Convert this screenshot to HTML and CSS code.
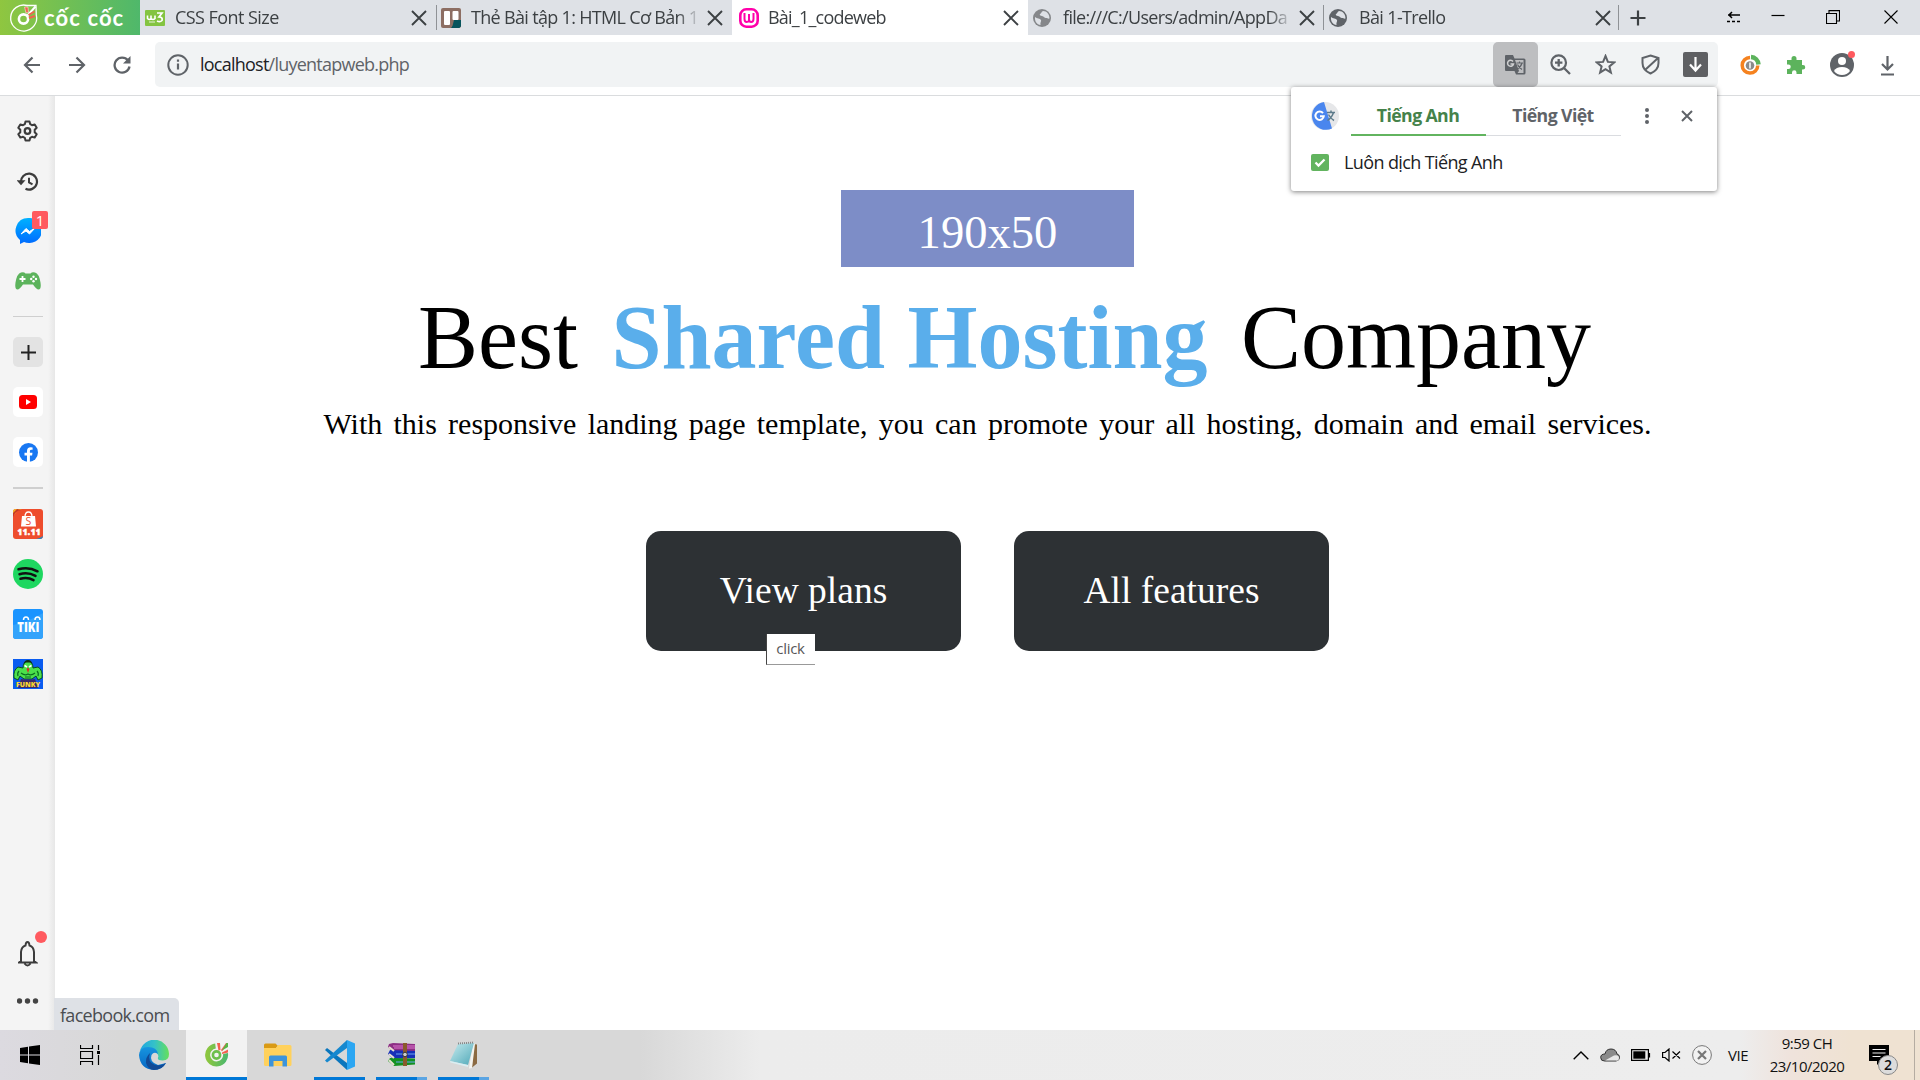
FILE: index.html
```html
<!DOCTYPE html>
<html lang="vi">
<head>
<meta charset="utf-8">
<title>Bài_1_codeweb</title>
<link rel="stylesheet" href="styles.css">
</head>
<body>
<svg class="defs" width="0" height="0">
  <defs>
    <symbol id="x" viewBox="0 0 16 16"><path d="M1 1l14 14M15 1L1 15" fill="none" stroke="#3c4043" stroke-width="1.9"/></symbol>
    <symbol id="globe" viewBox="0 0 18 18"><circle cx="9" cy="9" r="9" fill="currentColor"/><path d="M2 8c2 2 5 1 6 3 .6 1.600-1 2.400-.5 5C4 15.500 1.500 12.500 2 8zM10 2c-2 1-1.500 2.500-3 3-.8 1 .4 1.800 2 2 2 .2 2 2 4 2 1.500 0 2 1 3.500.5C16.500 5 14 2.200 10 2z" fill="#dee1e6"/></symbol>
    <linearGradient id="cg"><stop offset="0" stop-color="#8cc63f"/><stop offset="1" stop-color="#4fb96b"/></linearGradient>
    <linearGradient id="ms" x2="0" y2="1"><stop offset="0" stop-color="#00b2ff"/><stop offset="1" stop-color="#006aff"/></linearGradient>
    <linearGradient id="eg" x1="0" x2="1"><stop offset="0" stop-color="#1fa7e0"/><stop offset=".5" stop-color="#35c1c8"/><stop offset="1" stop-color="#66e05a"/></linearGradient>
    <linearGradient id="eb" x2="0" y2="1"><stop offset="0" stop-color="#1795df"/><stop offset="1" stop-color="#0667c4"/></linearGradient>
    <linearGradient id="np" x2="1" y2="1"><stop offset="0" stop-color="#c8ecef"/><stop offset="1" stop-color="#4fa8b8"/></linearGradient>
  </defs>
</svg>

<header class="tabstrip">
  <div class="brand">
    <svg width="30" height="30" viewBox="0 0 30 30"><path d="M18 2.500A13 13 0 1 0 27.300 12L27 2.500z" fill="none" stroke="#fff" stroke-width="1.300"/><circle cx="14.500" cy="16" r="4.600" fill="none" stroke="#fff" stroke-width="2.600"/><path d="M15.500 4l1.500 6 2.500-.5-.5-5.500z" fill="#f2614f" stroke="#fff" stroke-width=".5"/><path d="M18.500 12.500l8-9" stroke="#fff" stroke-width="2"/><path d="M19.500 12l6-3.500" stroke="#f2614f" stroke-width="2"/><path d="M20 15l6-2" stroke="#f2614f" stroke-width="2.200"/></svg>
    <span class="brand-name">cốc cốc</span>
  </div>
  <div class="tab">
    <svg class="fav" viewBox="0 0 20 16"><rect width="20" height="16" rx="1" fill="#84c441"/><path d="M2.500 5.500v3q2 2 3.500 0v-3 3q2 2 4 0v-3" fill="none" stroke="#fff" stroke-width="1.600"/><path d="M12 3h5l-3 4q4 0 3 3.500-2 2-5 .5" fill="none" stroke="#fff" stroke-width="1.700"/><path d="M4 12h6" stroke="#fff" stroke-width=".8"/></svg>
    <span class="title t-css">CSS Font Size</span><svg class="close"><use href="#x"/></svg>
  </div>
  <div class="tab sep">
    <svg class="fav" viewBox="0 0 20 20"><rect width="20" height="20" rx="2" fill="#8d6e63"/><path d="M10 20l6-7h4v5l-2 2z" fill="#00535b"/><path d="M13 12h7v6l-2 2h-7z" fill="#07545c"/><rect x="3" y="3" width="6" height="14" rx="1" fill="#fff"/><rect x="11.500" y="3" width="6" height="9" rx="1" fill="#fff"/></svg>
    <span class="title t-trello">Thẻ Bài tập 1: HTML Cơ Bản 1</span><svg class="close"><use href="#x"/></svg>
  </div>
  <div class="tab active">
    <svg class="fav" viewBox="0 0 20 20"><rect x="1.300" y="1.300" width="17.400" height="17.400" rx="6" fill="none" stroke="#f0a" stroke-width="2.600"/><path d="M5.500 5v6q0 3 2.300 3T10 11V6v5q0 3 2.200 3t2.300-3V5" fill="none" stroke="#f0a" stroke-width="2"/></svg>
    <span class="title t-code">Bài_1_codeweb</span><svg class="close"><use href="#x"/></svg>
  </div>
  <div class="tab">
    <svg class="fav globe pale"><use href="#globe"/></svg>
    <span class="title t-file">file:///C:/Users/admin/AppDa</span><svg class="close"><use href="#x"/></svg>
  </div>
  <div class="tab sep">
    <svg class="fav globe"><use href="#globe"/></svg>
    <span class="title t-last">Bài 1-Trello</span><svg class="close"><use href="#x"/></svg>
  </div>
  <div class="newtab"><svg width="16" height="16" viewBox="0 0 16 16"><path d="M8 .5v15M.5 8h15" stroke="#3c4043" stroke-width="2.200"/></svg></div>
  <div class="winctl">
    <svg viewBox="0 0 14 12"><path d="M1 4h12M5 1L2 4l3 3" fill="none" stroke="#000" stroke-width="1.500"/><path d="M0 10.500h14" stroke="#000" stroke-width="1.500" stroke-dasharray="3 2"/></svg>
    <svg viewBox="0 0 14 14"><path d="M.5 5.500h13" stroke="#000" stroke-width="1.200"/></svg>
    <svg viewBox="0 0 14 14"><path d="M.5 3.500h10v10H.5zM3 3.500V.6h10.500V11h-3" fill="none" stroke="#000" stroke-width="1.100"/></svg>
    <svg viewBox="0 0 14 14"><path d="M.5 .5l13 13M13.500 .5l-13 13" stroke="#000" stroke-width="1.100"/></svg>
  </div>
</header>

<nav class="toolbar">
  <div class="nav">
    <svg viewBox="0 0 18 18"><path d="M17 9H2M9.500 1.500L2 9l7.500 7.500" fill="none" stroke="#5f6368" stroke-width="2.200"/></svg>
    <svg viewBox="0 0 18 18"><path d="M1 9h15M8.500 1.500L16 9l-7.500 7.500" fill="none" stroke="#5f6368" stroke-width="2.200"/></svg>
    <svg viewBox="0 0 18 18"><path d="M15 4.500A7.500 7.500 0 1 0 16.500 10.500" fill="none" stroke="#5f6368" stroke-width="2.300"/><path d="M17.500 0v7.500H10z" fill="#5f6368"/></svg>
  </div>
  <div class="omnibox">
    <svg class="info" viewBox="0 0 22 22"><circle cx="11" cy="11" r="9.700" fill="none" stroke="#5f6368" stroke-width="2"/><path d="M11 9.500v6M11 5.500v2.200" stroke="#5f6368" stroke-width="2.200"/></svg>
    <div class="url">localhost<span>/luyentapweb.php</span></div>
    <div class="actions">
      <div class="act translate"><svg width="21" height="20" viewBox="0 0 21 20"><path d="M1 0h7l1.500 3.500H19q1.500 0 1.500 1.500v13q0 1.500-1.500 1.500h-8L9.500 16H1q-1 0-1-1V1q0-1 1-1z" fill="#5f6368"/><path d="M10 5h8.500v13h-6l1.500-2z" fill="#bdbec0"/><path d="M11.500 8h6.500M14.500 6.500V8M17 8q-1 4-5 6M12.500 9.500q1.500 3 4.500 5" stroke="#5f6368" stroke-width="1.200" fill="none"/><path d="M8 6.500A3 3 0 1 0 8.500 9H5.500" fill="none" stroke="#d0d1d2" stroke-width="1.500"/></svg></div>
      <div class="act"><svg width="21" height="21" viewBox="0 0 21 21"><circle cx="8.700" cy="8.700" r="7.300" fill="none" stroke="#5f6368" stroke-width="2.200"/><path d="M14 14l6 6M8.700 5v7.400M5 8.700h7.400" stroke="#5f6368" stroke-width="2.300"/></svg></div>
      <div class="act"><svg width="21" height="21" viewBox="0 0 21 21"><path d="M10.500 2l2.400 5.900 6.400.4-4.900 4.100 1.500 6.200-5.400-3.400-5.400 3.400 1.500-6.200-4.900-4.100 6.400-.4z" fill="none" stroke="#5f6368" stroke-width="2"/></svg></div>
      <div class="act"><svg width="21" height="21" viewBox="0 0 21 21"><path d="M10.500 1.500l8 2.500v5q0 7-8 10.500Q2.500 16 2.500 9V4zM5 16L17.500 4.500" fill="none" stroke="#5f6368" stroke-width="2"/></svg></div>
      <div class="act"><svg width="25" height="25" viewBox="0 0 25 25"><rect width="25" height="25" rx="2" fill="#5f6063"/><path d="M12.500 5v13M7 12.500l5.500 6 5.500-6" fill="none" stroke="#fff" stroke-width="2.200"/></svg></div>
    </div>
  </div>
  <div class="exts">
    <svg viewBox="0 0 24 24"><path d="M12 4.500A7.800 7.800 0 1 0 19.800 12.500" fill="none" stroke="#f5821f" stroke-width="3.500"/><path d="M13 4a8 8 0 0 1 7.500 7.500" fill="none" stroke="#5cb35c" stroke-width="4.500"/><circle cx="12" cy="12.500" r="4.300" fill="#8a8a8a"/><path d="M12 9.500v6" stroke="#fff" stroke-width="1.500"/></svg>
    <svg viewBox="0 0 24 24"><path d="M3 7h4.500V5.500a2.500 2.500 0 0 1 5 0V7H18v5h1a2.200 2.200 0 0 1 0 4.500h-1V21h-5.500v-1.500a2 2 0 0 0-4.500 0V21H3v-5h1.500a2 2 0 0 0 0-4.500H3z" fill="#5cb35c"/></svg>
    <div class="profile"><svg viewBox="0 0 24 24"><circle cx="12" cy="12" r="12" fill="#5f6368"/><circle cx="12" cy="8" r="4" fill="#fff"/><path d="M4 18q2-4 8-4t8 4q-3 4-8 4t-8-4z" fill="#fff"/></svg><i></i></div>
    <svg viewBox="0 0 24 24"><path d="M11.500 3v13M6 11l5.500 5.500 5.500-5.500M5 21.500h13" fill="none" stroke="#5f6368" stroke-width="2.200"/></svg>
  </div>
</nav>

<div class="workspace">
  <aside class="sidebar">
    <div class="item"><svg width="22" height="22" viewBox="0.500 0 22 22"><path d="M9 1.500h4l.7 2.700 1.800 1 2.700-.8 2 3.400-2 2v2.400l2 2-2 3.400-2.700-.8-1.800 1-.7 2.700H9l-.7-2.700-1.800-1-2.700.8-2-3.400 2-2V9.800l-2-2 2-3.400 2.700.8 1.800-1z" fill="none" stroke="#3c3c3c" stroke-width="2" stroke-linejoin="round"/><circle cx="11" cy="11" r="2.800" fill="none" stroke="#3c3c3c" stroke-width="2.200"/></svg></div>
    <div class="item"><svg width="22" height="20" viewBox="0.500 -0.800 22 20"><path d="M4.500 10.500A8 8 0 1 1 9 17" fill="none" stroke="#3c3c3c" stroke-width="2.200"/><path d="M0 8.500h9l-4.500 5z" fill="#3c3c3c"/><path d="M12.500 6v4.500l3.500 2" fill="none" stroke="#3c3c3c" stroke-width="2"/></svg></div>
    <div class="item"><svg width="26" height="26" viewBox="0 0 26 26"><path d="M13 0a13 12.500 0 1 1-4 24l-4 2v-4A12.500 12.500 0 0 1 13 0z" fill="url(#ms)"/><path d="M6 16l5-5.500 3.500 3L20 10l-5.500 6-3.500-3z" fill="#fff" stroke="#fff"/></svg><b class="badge">1</b></div>
    <div class="item"><svg width="26" height="18" viewBox="0 0 26 18"><path d="M6 .5q3-1 4.500 1h5Q17 -.5 20 .5q4 1 5.500 10 1 7-2 7-2 0-5.500-5h-10q-3.500 5-5.500 5-3 0-2-7Q2 1.500 6 .5z" fill="#5cb35c"/><path d="M7.500 4v6M4.500 7h6" stroke="#fff" stroke-width="1.800"/><g fill="#fff"><circle cx="18.500" cy="4.700" r="1.200"/><circle cx="18.500" cy="9.300" r="1.200"/><circle cx="16.200" cy="7" r="1.200"/><circle cx="21" cy="7" r="1.200"/></g></svg></div>
    <hr>
    <div class="item"><span class="tile plus"><svg width="15" height="15" viewBox="0 0 15 15"><path d="M7.500 0v15M0 7.500h15" stroke="#222" stroke-width="2"/></svg></span></div>
    <div class="item"><span class="tile"><svg width="18" height="14" viewBox="0 0 18 14"><rect width="18" height="14" rx="3.500" fill="#f00"/><path d="M7 4l5 3-5 3z" fill="#fff"/></svg></span></div>
    <div class="item"><span class="tile"><svg width="19" height="19" viewBox="0 0 19 19"><circle cx="9.500" cy="9.500" r="9.500" fill="#1877f2"/><path d="M8 19v-6.500H5.500V9.800H8V8q0-3.800 3.600-3.800l2 .2v2.300h-1.200q-1.500 0-1.500 1.400v1.700h2.600l-.4 2.700h-2.200V19z" fill="#fff"/></svg></span></div>
    <hr class="thick">
    <div class="item"><svg width="30" height="30" viewBox="0 0 30 30"><rect width="30" height="30" rx="3" fill="#ee4d2d"/><path d="M0 6V3q0-3 3-3h6Q4 1 2 5z" fill="#f5b21c"/><path d="M0 8Q2 2 8 1L4 0 0 4z" fill="#c5352a"/><path d="M23 30q4-.5 7-3-.5 3-3 3z" fill="#178bd0"/><path d="M9 7h13l1 10.500H8z" fill="#fff"/><path d="M12 8q0-5 3.500-5T19 8" fill="none" stroke="#fff" stroke-width="1.300"/><text x="15.500" y="16" text-anchor="middle" font-size="10.500" fill="#ee4d2d">S</text><text x="16" y="25.800" text-anchor="middle" font-size="8" font-weight="800" stroke="#fff" stroke-width=".5" fill="#fff" textLength="23">11.11</text></svg></div>
    <div class="item"><svg width="30" height="30" viewBox="0 0 30 30"><circle cx="15" cy="15" r="15" fill="#1ed760"/><path d="M5.500 10.300q10-3 19 2M6.500 15.200q8.500-2.500 16 1.700M7.500 19.800q7-2 13 1.400" fill="none" stroke="#111" stroke-width="2.500" stroke-linecap="round"/></svg></div>
    <div class="item"><svg width="30" height="30" viewBox="0 0 30 30"><rect width="30" height="30" rx="3" fill="#1a94ff"/><path d="M0 16q15-3 30-12v23q0 3-3 3H3q-3 0-3-3z" fill="#33a3fb"/><text x="15.300" y="23" text-anchor="middle" font-size="13.500" font-weight="800" fill="#fff" textLength="22" lengthAdjust="spacingAndGlyphs">TIKI</text><path d="M10.500 11q0-3 2.500-3t2.500 3M22 11q0-3 2.500-3t2.500 3" stroke="#fff" stroke-width="1.500" fill="none"/></svg></div>
    <div class="item"><svg width="30" height="30" viewBox="0 0 30 30"><path d="M0 0h30v30H0z" fill="#0a5cf0"/><path d="M1 19q-1-8 4-11l5 1q0-6 5-7 5 1 5 7l5-1q5 3 4 11l-4 2-2-4-4 3h-8l-4-3-2 4z" fill="#4be04b" stroke="#0a4d20"/><path d="M10.500 5q1-4 4.500-4t4.500 4l-2-1.500h-5z" fill="#102d18"/><path d="M11.500 6.500l2.500 1.500M18.500 6.500L16 8" stroke="#fff" stroke-width="1.500"/><path d="M13.500 10l1.500-1.500 1.500 1.500-1.500 4z" fill="#d53224"/><path d="M8 14q4 3 7 1 3 2 7-1M12 18h6M6 12q-2 2-1 5M24 12q2 2 1 5" fill="none" stroke="#0a6d20" stroke-width="1.200"/><path d="M8 20q7 1 14 0l3 9H5z" fill="#3a2a6a"/><text x="15" y="27.500" text-anchor="middle" font-size="7.500" font-weight="800" fill="#ffd92e" textLength="24" lengthAdjust="spacingAndGlyphs">FUNKY</text></svg></div>
    <div class="bottom">
      <div class="item"><svg width="20" height="26" viewBox="0.500 0 20 26"><path d="M3.500 20V11Q4 5.500 8 4.500q.3-3.500 2-3.500t2 3.500q4 1 4.500 6.500v9l2 1.500h-17zM7 22.500q3 4 6 0" fill="none" stroke="#3c3c3c" stroke-width="2"/></svg><i class="dot"></i></div>
      <svg class="more" width="22" height="6" viewBox="0.500 0 22 6"><g fill="#444"><circle cx="3" cy="3" r="2.700"/><circle cx="11" cy="3" r="2.700"/><circle cx="19" cy="3" r="2.700"/></g></svg>
    </div>
  </aside>

  <main class="page">
    <div class="logo">190x50</div>
    <h1>Best <b>Shared Hosting</b> Company</h1>
    <p>With this responsive landing page template, you can promote your all hosting, domain and email services.</p>
    <div class="buttons">
      <a class="btn">View plans<span class="tip">click</span></a>
      <a class="btn">All features</a>
    </div>
  </main>
  <div class="status"><span>facebook.com</span></div>
</div>

<section class="popup">
  <div class="popup-head">
    <svg width="28" height="28" viewBox="0 0 28 28"><circle cx="14" cy="14" r="14" fill="#e6e7e9"/><path d="M13 0L21 26.500A14 14 0 1 1 13 0z" fill="#4a86ee"/><path d="M12 11.200A4.200 4.200 0 1 0 12.800 14.200H9" fill="none" stroke="#fff" stroke-width="2"/><path d="M16 10.500h8M20 8.500v2M22.500 10.500q-1.500 5-6 8M17.500 12.500q2 4 5.500 6" fill="none" stroke="#5c7a8a" stroke-width="1.500"/></svg>
    <div class="lang-tab on">Tiếng Anh</div>
    <div class="lang-tab">Tiếng Việt</div>
    <svg class="dots" width="4" height="16" viewBox="0 0 4 16"><g fill="#5f6368"><circle cx="2" cy="2" r="2"/><circle cx="2" cy="8" r="2"/><circle cx="2" cy="14" r="2"/></g></svg>
    <svg class="dismiss" width="12" height="12" viewBox="0 0 12 12"><path d="M1 1l10 10M11 1L1 11" stroke="#5f6368" stroke-width="2"/></svg>
  </div>
  <div class="popup-row">
    <svg width="18" height="17" viewBox="0 0 18 17"><rect width="18" height="17" rx="2" fill="#62b45f"/><path d="M4.500 8.500l3 3 6-6" fill="none" stroke="#fff" stroke-width="2.300"/></svg>
    <span>Luôn dịch Tiếng Anh</span>
  </div>
</section>

<footer class="taskbar">
  <div class="apps">
    <div class="app start"><svg width="20" height="20" viewBox="0 0 20 20"><path d="M0 3l8-1.200v7.700H0zM9 1.600L20 0v9.500H9zM0 10.500h8v7.700L0 17zM9 10.500h11V20L9 18.400z"/></svg></div>
    <div class="app view"><svg width="20" height="20" viewBox="0 0 20 20"><path d="M.5 0v3.500h12V0M.5 20v-3.500h12V20M.5 6.500h12v7H.5zM18.500 0v5M18.500 10v10" fill="none" stroke="#000" stroke-width="1.200"/><path d="M17 6h3v3h-3z"/></svg></div>
    <div class="app edge"><svg width="30" height="30" viewBox="0 0 30 30"><path d="M1 11A14.700 14.700 0 0 1 30 14q0 6-6 6.500-6 .2-5-3 1-2-1-4-6-7-17-2.500z" fill="url(#eg)"/><path d="M0 15Q1 7 9 7q9 0 10 7-4-3-6.500 1Q10 22 19 25l8-2q-4 7-12 7Q1 29 0 15z" fill="url(#eb)"/><path d="M11 13q-3 9 5 12 6 1.500 11-2-4 7-12 7-6-.5-8-7-.5-6 4-10z" fill="#114a96"/></svg></div>
    <div class="app current"><svg width="26" height="26" viewBox="0 0 26 26"><path d="M11.500 5A9 9 0 1 0 21.500 12.500" fill="none" stroke="url(#cg)" stroke-width="5"/><circle cx="12.500" cy="14" r="3.600" fill="none" stroke="#6cbf4c" stroke-width="2.600"/><path d="M13 2h3l.5 7-2 .5zM17 9l5-7h2l-6 8.500zM18 11.500l6-3v3l-6 1.500z" fill="#f2614f"/><path d="M18 9.500l4.500-7.500H24v4z" fill="#57b847"/></svg></div>
    <div class="app"><svg width="28" height="24" viewBox="0 0 28 24"><path d="M0 2q0-1.500 1.500-1.500h10L14 3 12 5H0z" fill="#d99a15"/><path d="M0 5h12l2-3h12q1.500 0 1.500 1.500v18q0 1.500-1.500 1.500H1.500Q0 23 0 21.500z" fill="#ffd15c"/><path d="M5 23.500V14q0-1.500 1.500-1.500h15q1.500 0 1.500 1.500v9.500h-4.500V18h-9v5.500z" fill="#3d94db"/></svg></div>
    <div class="app open"><svg width="30" height="30" viewBox="0 0 30 30"><path d="M0 10l2-2 20 15v7z" fill="#0a76bd"/><path d="M0 20.500l2 2L22 8V0z" fill="#1688cf"/><path d="M22 0l8 3.500v23L22 30z" fill="#2ba6f2"/></svg></div>
    <div class="app open multi"><svg width="28" height="24" viewBox="0 0 28 24"><path d="M1 1l4-1 22 1v7l-22 1-5-5z" fill="#8d2f84"/><path d="M2 7l25 1v7l-22 1-5-5z" fill="#1730b8"/><path d="M2 15l25 .5v6L6 23l-6-5z" fill="#149120"/><path d="M5 3h22M6 5h21" stroke="#df78ce"/><path d="M1 4l5 4M1 11l5 4M1 17l5 5" stroke="#e8e0d0" stroke-width="2"/><path d="M8 11h19M8 19h19" stroke="#6ba5ee"/><path d="M15 0h4v23h-4z" fill="#8a5a2b"/><circle cx="17" cy="11.500" r="2.300" fill="#ccc" stroke="#333"/></svg></div>
    <div class="app open multi"><svg width="30" height="28" viewBox="0 0 30 28"><path d="M24 3l4 .5v19l-5 4z" fill="#8b6a42"/><path d="M24 2l2 1-3 24-3 .5z" fill="#f4f4ef"/><path d="M9 3l16-1-6 22-18-4z" fill="url(#np)"/><path d="M19 24l-18-4 .5 1.500L19 26z" fill="#d9eef2"/><path d="M9 2.500l16-1" stroke="#888" stroke-width="2" stroke-dasharray="1 1"/></svg></div>
  </div>
  <div class="tray">
    <svg width="16" height="9" viewBox="0 0 16 9"><path d="M.7 8.300L8 1l7.300 7.300" fill="none" stroke="#000" stroke-width="1.400"/></svg>
    <svg width="20" height="14" viewBox="0 0 20 14"><path d="M4.500 13Q.7 13 .7 9.500T5 6q1-5 6-5t6 5q2.500.5 2.500 3.500T16 13z" fill="#8b8b8b" stroke="#333"/><path d="M5 12.500l9-5q5-1 5 2.500t-3 2.500z" fill="#e8e8e8"/></svg>
    <svg width="20" height="12" viewBox="0 0 20 12"><path d="M.6 .6h16.800v10.800H.6zM18.500 4v4.500" fill="none" stroke="#000" stroke-width="1.200"/><path d="M2.300 2.300h12v7.400h-12z"/></svg>
    <svg width="19" height="14" viewBox="0 0 19 14"><path d="M.6 4.500H3L7 1v12L3 9.500H.6zM10.500 3.500l7.500 7M18 3.500l-7.500 7" fill="none" stroke="#000" stroke-width="1.200"/></svg>
    <svg width="20" height="20" viewBox="0 0 20 20"><circle cx="10" cy="10" r="9.400" fill="#f2f2f2" stroke="#777"/><path d="M6 6l8 8M14 6l-8 8" stroke="#777" stroke-width="2.200"/></svg>
    <span class="lang">VIE</span>
    <div class="clock"><span>9:59 CH</span><span>23/10/2020</span></div>
    <div class="notes"><svg width="20" height="20" viewBox="0 0 20 20"><path d="M0 0h20v16h-8l-4 4v-4H0z"/><path d="M3.500 4.500h13M3.500 8h13M3.500 11.500h8" stroke="#eee" stroke-width="1.200"/></svg><b>2</b></div>
  </div>
</footer>
</body>
</html>
```
FILE: styles.css
```css
* { box-sizing: border-box; }
body {
  margin: 0;
  width: 1920px;
  height: 1080px;
  overflow: hidden;
  display: flex;
  flex-direction: column;
  background: #fff;
  font-family: "Open Sans", "Noto Sans", sans-serif;
}
svg { display: block; flex: none; }
.defs { position: absolute; }

/* Tab strip */
.tabstrip { display: flex; height: 35px; flex: none; background: #dee1e6; }
.brand {
  width: 140px;
  display: flex;
  align-items: center;
  padding-left: 9px;
  gap: 5px;
  background: linear-gradient(90deg, #8fc640, #4fb86b);
}
.brand-name { color: #fff; font: 700 22px/34px Lato, sans-serif; letter-spacing: 1.100px; white-space: nowrap; }
.tab {
  width: 296px;
  height: 35px;
  flex: none;
  display: flex;
  align-items: center;
  padding: 0 9px 0 5px;
  position: relative;
}
.tab.active { background: #fff; }
.tab.active .fav { margin-left: 2px; margin-right: -1px; }
.tab.sep::before, .newtab::before {
  content: "";
  position: absolute;
  left: 0;
  top: 5px;
  width: 1px;
  height: 25px;
  background: #8f9296;
}
.tab.sep ~ .tab.sep::before { left: -1px; }
.newtab::before { left: -2px; }
.fav { width: 20px; height: 20px; }
.fav.globe { width: 18px; height: 18px; margin-right: 2px; color: #5f6368; }
.fav.pale { color: #85878a; }
.title {
  flex: 1;
  margin: 0 5px 0 10px;
  font-size: 18px;
  line-height: 30px;
  padding-bottom: 1px;
  color: #3c4043;
  white-space: nowrap;
  overflow: hidden;
  -webkit-mask: linear-gradient(90deg, #000 206px, transparent 230px);
}
.t-css { letter-spacing: -.55px; }
.t-trello { letter-spacing: -.68px; }
.t-code { letter-spacing: -.77px; }
.t-file { letter-spacing: -.68px; }
.t-last { letter-spacing: -.65px; }
.close { width: 16px; height: 16px; }
.newtab { position: relative; width: 26px; display: flex; align-items: center; justify-content: flex-end; }
.winctl { flex: 1; display: flex; align-items: center; justify-content: flex-end; padding-right: 22px; padding-bottom: 1px; }
.winctl svg { width: 14px; height: 14px; }
.winctl svg:nth-child(2) { margin-left: 30px; }
.winctl svg:nth-child(3) { margin-left: 41px; }
.winctl svg:nth-child(4) { margin-left: 44px; }

/* Toolbar */
.toolbar { display: flex; align-items: center; height: 61px; flex: none; padding-bottom: 1px; border-bottom: 1px solid #dadcde; }
.nav { width: 155px; display: flex; gap: 27px; padding-left: 23px; }
.nav svg { width: 18px; height: 18px; }
.omnibox { width: 1563px; height: 45px; flex: none; display: flex; align-items: center; padding-left: 12px; background: #f1f3f4; border-radius: 5px; }
.info { width: 22px; height: 22px; }
.url { flex: 1; padding: 0 0 1px 11px; font-size: 18px; letter-spacing: -.76px; color: #202124; }
.url span { color: #5f6368; }
.actions { display: flex; }
.act { width: 45px; height: 45px; display: flex; align-items: center; justify-content: center; }
.act.translate { background: #bdbec0; border-radius: 5px; }
.exts { display: flex; align-items: center; gap: 22px; padding-left: 20px; }
.exts svg { width: 24px; height: 24px; }
.profile { position: relative; }
.profile i { position: absolute; right: -1px; top: -2px; width: 7px; height: 7px; border-radius: 50%; background: #ff5a5f; }

/* Side bar */
.workspace { position: relative; display: flex; flex: 1; min-height: 0; }
.sidebar {
  width: 55px;
  display: flex;
  flex-direction: column;
  align-items: center;
  padding: 10px 0 0 1px;
  background: linear-gradient(90deg, #f4f4f4 48px, #e7e7e7 55px);
}
.item { position: relative; height: 50px; width: 30px; flex: none; display: flex; align-items: center; justify-content: center; }
.badge {
  position: absolute;
  left: 19px;
  top: 5px;
  width: 16px;
  height: 18px;
  border-radius: 2px;
  background: #ff5a5f;
  color: #fff;
  font: 400 15px/18px "Open Sans", sans-serif;
  text-align: center;
}
.sidebar hr { width: 30px; height: 1px; margin: 10px 0 10px; border: 0; background: #cfcfcf; flex: none; }
.sidebar hr.thick { height: 2px; }
.tile { width: 30px; height: 30px; border-radius: 5px; background: #fff; display: flex; align-items: center; justify-content: center; }
.tile.plus { background: #e3e3e3; }
.bottom { margin-top: auto; display: flex; flex-direction: column; align-items: center; height: 101px; }
.dot { position: absolute; left: 22px; top: 2px; width: 12px; height: 12px; border-radius: 50%; background: #ff5a5f; }
.more { margin-top: 19px; }

/* Page */
.page { flex: 1; display: flex; flex-direction: column; align-items: center; font-family: "Liberation Serif", serif; color: #000; }
.logo { width: 293px; height: 77px; margin-top: 94px; background: #7d8dc7; color: #fff; font-size: 46.600px; line-height: 85px; text-align: center; }
h1 { margin: 19px 0 0 34px; font-size: 90px; line-height: 103px; font-weight: 400; white-space: nowrap; }
h1 b { color: #5aaeeb; margin: 0 11px; }
.page p { margin: 18px 0 0; font-size: 30px; line-height: 34px; word-spacing: 3.750px; white-space: nowrap; }
.buttons { display: flex; gap: 53px; margin-top: 90px; }
.btn { position: relative; width: 315px; height: 120px; border-radius: 15px; background: #2d3134; color: #fff; font-size: 37.500px; line-height: 120px; text-align: center; }
.tip {
  position: absolute;
  left: 120px;
  top: 103px;
  width: 49px;
  height: 31px;
  padding-right: 1px;
  border-left: 1px solid #444;
  border-bottom: 1px solid #999;
  background: #fff;
  color: #575757;
  font: 15px/29px "Open Sans", sans-serif;
  letter-spacing: -.3px;
}
.status {
  position: absolute;
  left: 54px;
  bottom: 0;
  width: 125px;
  height: 32px;
  padding-left: 6px;
  border-radius: 0 5px 0 0;
  background: #dee1e6;
  color: #4a4d51;
  font-size: 18px;
  letter-spacing: -.7px;
  line-height: 35px;
}

/* Translate popup, hanging below the address bar */
.popup {
  position: absolute;
  left: 1291px;
  top: 87px;
  width: 426px;
  height: 104px;
  padding: 4px 20px 0;
  border-radius: 3px;
  background: #fff;
  box-shadow: 0 1px 5px rgba(0, 0, 0, .5);
}
.popup-head { display: flex; align-items: center; height: 50px; }
.lang-tab {
  width: 135px;
  height: 45px;
  margin-bottom: 5px;
  border-bottom: 1px solid #dadce0;
  color: #5f6368;
  font-weight: 700;
  font-size: 17.700px;
  letter-spacing: -.6px;
  line-height: 49px;
  padding-right: 1px;
  text-align: center;
  white-space: nowrap;
}
.lang-tab.on { margin-left: 12px; border-bottom: 2px solid #62b45f; color: #45824a; }
.dots { margin-left: 24px; }
.dismiss { margin-left: 32px; }
.popup-row { display: flex; align-items: center; gap: 15px; height: 42px; font-size: 18px; letter-spacing: -.62px; color: #202124; }

/* Task bar */
.taskbar {
  height: 50px;
  flex: none;
  display: flex;
  justify-content: space-between;
  background: linear-gradient(90deg, #dcdae0 0, #d8d8d8 120px, #d8d8d8 640px, #ececec 760px, #ededed 1740px, #efe3dc 1790px, #efe2d2 1850px);
}
.apps { display: flex; }
.app { width: 62px; height: 50px; display: flex; align-items: center; justify-content: center; position: relative; }
.app.start { width: 60px; }
.app.view { padding-right: 2px; }
.app.edge { margin: 0 1px; padding-right: 1px; }
.app.current { width: 61px; background: #f2f2f2; border-bottom: 3px solid #0078d7; padding-top: 1px; }
.app.open::after { content: ""; position: absolute; left: 5px; bottom: 0; width: 51px; height: 3px; background: #0078d7; }
.app.multi::after { background: linear-gradient(90deg, #0078d7 41px, #5ba5e3 41px); }
.tray { display: flex; align-items: center; font-size: 15px; letter-spacing: -.5px; color: #111; padding-right: 5px; }
.tray > svg { margin-right: 11px; }
.lang { margin-left: 5px; }
.clock { width: 80px; margin: 0 21px 0 19px; display: flex; flex-direction: column; align-items: center; line-height: 23px; }
.notes { position: relative; width: 47px; height: 50px; padding: 15px 0 0 1px; border-right: 1px solid #b5aca2; }
.notes b { position: absolute; left: 10px; top: 25px; width: 20px; height: 20px; border: 1px solid #888; border-radius: 50%; background: #dcdcdc; font: 600 14px/18px "Open Sans", sans-serif; letter-spacing: 0; text-align: center; }
```
